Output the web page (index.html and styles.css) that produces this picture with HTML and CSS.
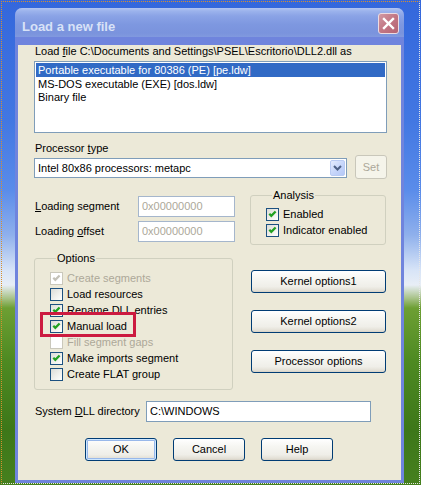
FILE: index.html
```html
<!DOCTYPE html>
<html>
<head>
<meta charset="utf-8">
<link rel="stylesheet" href="styles.css">
</head>
<body>
<div class="desktop">
  <div class="window">
    <div class="titlebar">
      <span class="title">Load a new file</span>
      <span class="close"><svg width="19" height="19" viewBox="0 0 19 19"><path d="M5 5 L14 14 M14 5 L5 14" stroke="#fff" stroke-width="2.4" stroke-linecap="square"/></svg></span>
    </div>
    <div class="content">
      <div class="lbl load-lbl">Load <u>f</u>ile C:\Documents and Settings\PSEL\Escritorio\DLL2.dll as</div>
      <div class="listbox">
        <div class="item sel">Portable executable for 80386 (PE) [pe.ldw]</div>
        <div class="item">MS-DOS executable (EXE) [dos.ldw]</div>
        <div class="item">Binary file</div>
      </div>
      <div class="lbl proc-lbl">Processor <u>t</u>ype</div>
      <div class="proc-row">
        <div class="combo">
          <span class="combo-text">Intel 80x86 processors: metapc</span>
          <span class="drop"><svg width="9" height="6" viewBox="0 0 9 6"><path d="M1 1 L4.5 4.5 L8 1" fill="none" stroke="#4d6185" stroke-width="2"/></svg></span>
        </div>
        <div class="btn set">Set</div>
      </div>
      <div class="mid-row">
        <div class="loading">
          <div class="field-row"><span class="flabel"><u>L</u>oading segment</span><span class="input dis">0x00000000</span></div>
          <div class="field-row second"><span class="flabel">Loading <u>o</u>ffset</span><span class="input dis">0x00000000</span></div>
        </div>
        <fieldset class="group analysis">
          <legend>Analysis</legend>
          <div class="cb first"><span class="box"><svg width="11" height="11" viewBox="0 0 11 11"><path d="M2.3 4.8 L4.3 6.8 L8.6 2.5" fill="none" stroke="#21a121" stroke-width="2.3"/></svg></span>Enabled</div>
          <div class="cb"><span class="box"><svg width="11" height="11" viewBox="0 0 11 11"><path d="M2.3 4.8 L4.3 6.8 L8.6 2.5" fill="none" stroke="#21a121" stroke-width="2.3"/></svg></span>Indicator enabled</div>
        </fieldset>
      </div>
      <div class="opt-row">
        <fieldset class="group options">
          <legend>Options</legend>
          <div class="cb first disabled"><span class="box"><svg width="11" height="11" viewBox="0 0 11 11"><path d="M2.3 4.8 L4.3 6.8 L8.6 2.5" fill="none" stroke="#c4c2b8" stroke-width="2.3"/></svg></span>Create segments</div>
          <div class="cb"><span class="box"></span>Load resources</div>
          <div class="cb"><span class="box"><svg width="11" height="11" viewBox="0 0 11 11"><path d="M2.3 4.8 L4.3 6.8 L8.6 2.5" fill="none" stroke="#21a121" stroke-width="2.3"/></svg></span>Rename DLL entries</div>
          <div class="cb marked"><span class="box"><svg width="11" height="11" viewBox="0 0 11 11"><path d="M2.3 4.8 L4.3 6.8 L8.6 2.5" fill="none" stroke="#21a121" stroke-width="2.3"/></svg></span>Manual load<span class="highlight"></span></div>
          <div class="cb disabled"><span class="box"></span>Fill segment gaps</div>
          <div class="cb"><span class="box"><svg width="11" height="11" viewBox="0 0 11 11"><path d="M2.3 4.8 L4.3 6.8 L8.6 2.5" fill="none" stroke="#21a121" stroke-width="2.3"/></svg></span>Make imports segment</div>
          <div class="cb"><span class="box"></span>Create FLAT group</div>
        </fieldset>
        <div class="kbtns">
          <div class="btn wide">Kernel options1</div>
          <div class="btn wide">Kernel options2</div>
          <div class="btn wide">Processor options</div>
        </div>
      </div>
      <div class="sys-row">
        <span class="slabel">System <u>D</u>LL directory</span>
        <span class="input sys">C:\WINDOWS</span>
      </div>
      <div class="btn-row">
        <div class="btn dlg default">OK</div>
        <div class="btn dlg">Cancel</div>
        <div class="btn dlg">Help</div>
      </div>
    </div>
  </div>
</div>
</body>
</html>
```

FILE: styles.css
```css
* { box-sizing: border-box; }
body { margin: 0; }

.desktop {
  position: relative;
  width: 421px;
  height: 485px;
  padding: 8px 0 0 15px;
  font-family: "Liberation Sans", Arial, sans-serif;
  font-size: 11px;
  color: #000;
  background: linear-gradient(to bottom,
    #3467dc 0px, #4277e2 120px, #5a8cea 190px, #8fb0ec 235px,
    #d7e4f7 270px, #e8eef6 285px, #a9c38a 298px, #6d9f33 308px,
    #4e8a22 360px, #3d7719 430px, #46801e 485px);
}
.desktop::after {
  content: "";
  position: absolute;
  inset: 1px;
  border: 1px dotted;
  border-color: #d8902e #e6e6e6 #e6e6e6 #d8902e;
  pointer-events: none;
}

.window {
  width: 389px;
  border: 3px solid #6f84dd;
  border-top: 0;
  border-radius: 7px 7px 0 0;
  background: #6f84dd;
}

.titlebar {
  height: 29px;
  margin: 0 -3px;
  border-radius: 7px 7px 0 0;
  background: linear-gradient(to bottom, #b3c5f2 0px, #9cb3ec 3px, #8aa3e6 8px, #7e98e0 16px, #7a93dd 25px, #8199df 29px);
  display: flex;
  justify-content: space-between;
  align-items: flex-start;
  padding: 0 5px 0 7px;
}
.title {
  font-weight: bold;
  font-size: 13px;
  line-height: 15px;
  margin-top: 11px;
  color: #d8e2f7;
}
.close {
  width: 21px;
  height: 21px;
  margin-top: 5px;
  border: 1px solid #ecdbe2;
  border-radius: 3px;
  background: linear-gradient(135deg, #d29aa4, #c27684 50%, #b56373);
  display: flex;
}

.content {
  height: 435px;
  background: #ece9d8;
  padding: 0 14px 0 16px;
}

.lbl { line-height: 13px; height: 13px; padding-left: 1px; }
.load-lbl { padding-top: 0; margin-top: 8px; height: 13px; }
.listbox {
  margin-top: 3px;
  width: 353px;
  height: 72px;
  border: 1px solid #7f9db9;
  background: #fff;
  padding: 1px 1px 0 1px;
}
.item { height: 13px; line-height: 14px; padding-left: 2px; white-space: nowrap; }
.item.sel { background: #316ac5; color: #fff; height: 14px; }

.proc-lbl { margin-top: 9px; }
.proc-row { display: flex; align-items: flex-start; height: 24px; }
.combo {
  margin-top: 3px;
  width: 313px;
  height: 20px;
  border: 1px solid #7f9db9;
  background: #fff;
  display: flex;
  align-items: center;
  justify-content: space-between;
  padding: 0 1px 0 3px;
}
.combo-text { line-height: 14px; }
.drop {
  width: 15px;
  height: 16px;
  border: 1px solid #b9cbf3;
  border-radius: 2px;
  background: linear-gradient(135deg, #e4ecfd, #c3d3fa 60%, #b5c8f6);
  display: flex;
  align-items: center;
  justify-content: center;
}

.btn {
  border: 1px solid #003c74;
  border-radius: 3px;
  background: linear-gradient(to bottom, #ffffff 0%, #f6f6f2 35%, #efeee8 75%, #e3e0d6 92%, #d6d0c5 100%);
  display: flex;
  align-items: center;
  justify-content: center;
  line-height: 13px;
}
.set {
  margin-left: 8px;
  width: 32px;
  height: 24px;
  border-color: #c9c7ba;
  background: #f5f4ea;
  color: #aca899;
}

.mid-row { display: flex; align-items: flex-start; margin-top: 10px; }
.loading { width: 216px; padding-top: 7px; }
.field-row { display: flex; align-items: center; height: 21px; }
.field-row.second { margin-top: 4px; }
.flabel { width: 104px; padding-left: 1px; line-height: 13px; }
.input {
  height: 21px;
  border: 1px solid #7f9db9;
  background: #fff;
  padding: 0 0 0 3px;
  display: flex;
  align-items: center;
  line-height: 13px;
}
.input.dis { width: 97px; color: #aca899; border-color: #a5b6cc; }

.group {
  margin: 0;
  padding: 0 0 0 15px;
  border: 1px solid #d0d0bf;
  border-radius: 3px;
  min-width: 0;
}
.group legend {
  padding: 0 1px;
  margin-left: 6px;
  line-height: 13px;
  font-size: 11px;
}
.analysis { width: 136px; padding-bottom: 6px; }
.options { width: 199px; padding-bottom: 7px; }

.cb { display: flex; align-items: flex-start; height: 16px; line-height: 16px; white-space: nowrap; }
.cb.first { margin-top: 4px; }
.options .cb.first { margin-top: 5px; }
.box {
  flex: none;
  width: 13px;
  height: 13px;
  margin: 2px 4px 0 0;
  border: 1px solid #1c5180;
  background: linear-gradient(135deg, #dcdcd7, #f5f5f2 70%, #fff);
  display: flex;
}
.cb.disabled { color: #aca899; }
.cb.disabled .box { border-color: #cac8bb; background: #fff; }

.marked { position: relative; }
.highlight {
  position: absolute;
  left: -10px;
  top: -6px;
  width: 96px;
  height: 25px;
  border: 3px solid #cc1a40;
}

.opt-row { display: flex; align-items: flex-start; margin-top: 7px; }
.kbtns { margin-left: 18px; padding-top: 18px; display: flex; flex-direction: column; gap: 17px; }
.btn.wide { width: 135px; height: 23px; }

.sys-row { display: flex; align-items: center; margin-top: 11px; height: 21px; }
.slabel { width: 112px; padding-left: 1px; line-height: 13px; }
.input.sys { width: 225px; }

.btn-row { display: flex; gap: 16px; margin-top: 16px; padding-left: 51px; }
.btn.dlg { width: 72px; height: 23px; }
.btn.default { box-shadow: inset 0 0 0 1px #cee7ff, inset 0 0 0 2px #98b8ea; }
```
